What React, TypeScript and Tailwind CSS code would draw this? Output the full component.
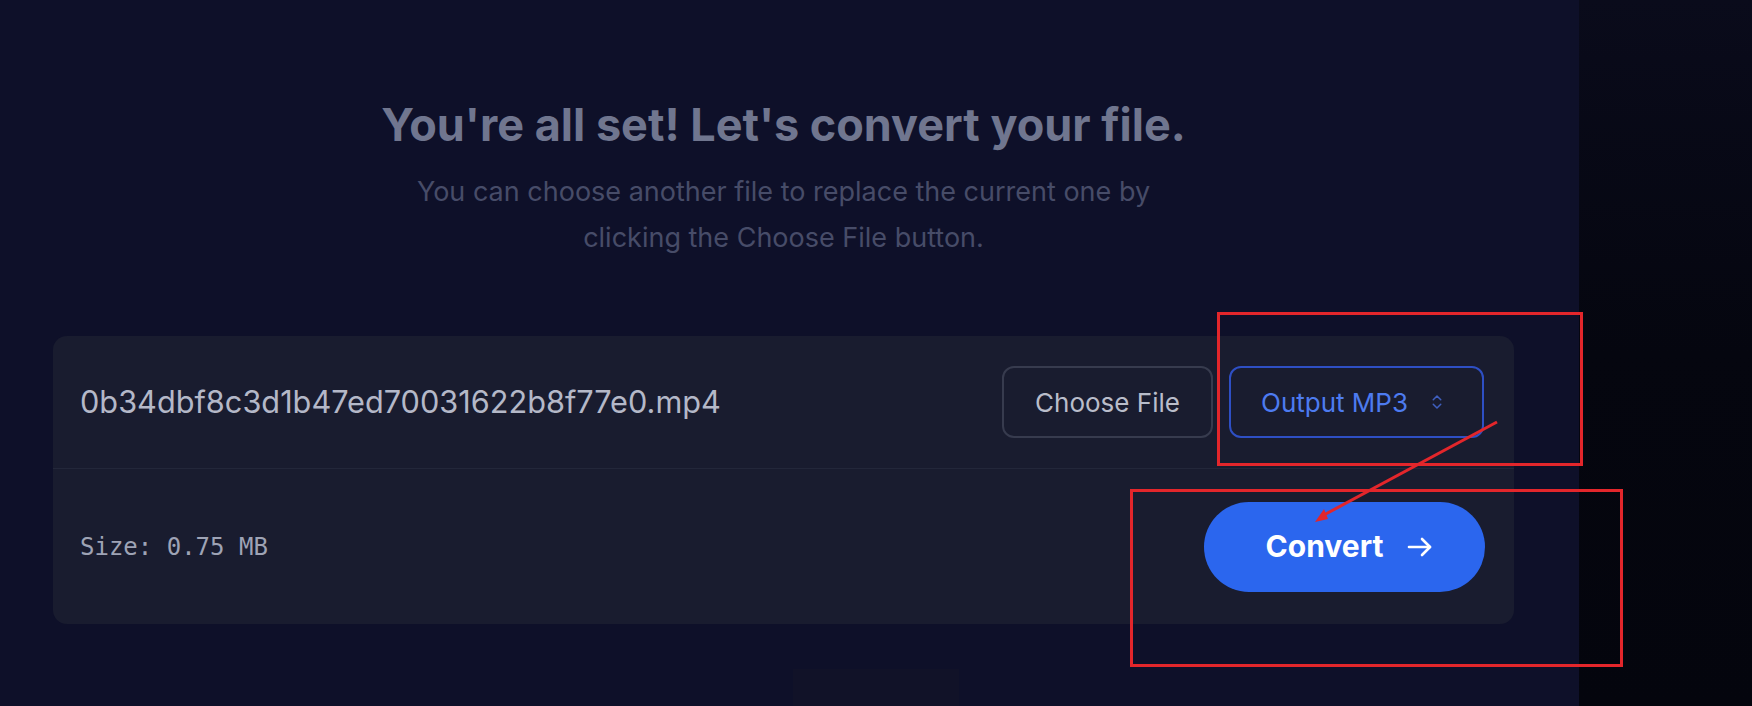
import { ChevronsUpDown } from "lucide-react";

const fileName = "0b34dbf8c3d1b47ed70031622b8f77e0.mp4";
const fileSize = "0.75 MB";

function ArrowIcon() {
  return (
    <svg width="26" height="20" viewBox="0 0 26 20" fill="none" stroke="currentColor" strokeWidth="2.6" strokeLinecap="round" strokeLinejoin="round">
      <path d="M2 10h21" />
      <path d="M15 2l8 8-8 8" />
    </svg>
  );
}

// red markup drawn on top of the screenshot
function Annotations() {
  return (
    <>
      <div className="absolute left-[1217px] top-[312px] w-[366px] h-[154px] border-[3px] border-[#e3262b] pointer-events-none" />
      <div className="absolute left-[1130px] top-[489px] w-[493px] h-[178px] border-[3px] border-[#e3262b] pointer-events-none" />
      <svg className="absolute left-0 top-0 pointer-events-none" width="1752" height="706">
        <line x1="1497" y1="422" x2="1322" y2="516" stroke="#e3262b" strokeWidth="3" />
        <path d="M1315 522 l13 -3 l-4 -10 z" fill="#e3262b" />
      </svg>
    </>
  );
}

export default function App() {
  return (
    <div className="relative flex h-[706px] w-full overflow-hidden font-['Inter',sans-serif]">
      <main className="w-[1579px] shrink-0 bg-[#0e1029] pl-[53px] pr-[65px] pt-[98px]">
        <div className="flex flex-col items-center text-center">
          <h1 className="text-[45px] leading-[1.2] font-bold text-[#70768f]">
            You're all set! Let's convert your file.
          </h1>
          <p className="mt-[17px] w-[800px] text-[27px] leading-[46px] text-[#474c68]">
            You can choose another file to replace the current one by clicking the Choose File button.
          </p>
        </div>

        <section className="mt-[75px] rounded-[14px] bg-[#191c2f]">
          <div className="flex h-[133px] items-center justify-between border-b border-[#23273a] pl-[27px] pr-[30px]">
            <span className="text-[30.7px] text-[#b4b8c8]">{fileName}</span>
            <div className="flex items-center gap-4">
              <button className="h-[72px] w-[211px] rounded-[12px] border-2 border-[#373b4e] text-[26px] text-[#b9bdca]">
                Choose File
              </button>
              <button className="flex h-[72px] w-[255px] items-center rounded-[12px] border-2 border-[#2e4fc4] pl-[30px] text-[26px] text-[#4d7bf0]">
                <span>Output MP3</span>
                <ChevronsUpDown className="ml-[20px] text-[#3f5fbf]" size={18} strokeWidth={2} />
              </button>
            </div>
          </div>
          <div className="flex h-[155px] items-center justify-between pl-[27px] pr-[29px]">
            <span className="font-['DejaVu_Sans_Mono',monospace] text-[24px] text-[#9ea3b5]">
              Size: {fileSize}
            </span>
            <button className="flex h-[90px] w-[281px] items-center justify-center gap-[24px] rounded-full bg-[#2b66ee] pl-[10px] text-[30px] font-bold text-white">
              <span>Convert</span>
              <ArrowIcon />
            </button>
          </div>
        </section>

        <div className="mt-[45px] ml-[740px] h-[40px] w-[166px] bg-[#111228]" />
      </main>
      <aside className="flex-1 bg-gradient-to-b from-[#0a0b1b] via-[#05060f] to-[#04050d]" />
      <Annotations />
    </div>
  );
}
